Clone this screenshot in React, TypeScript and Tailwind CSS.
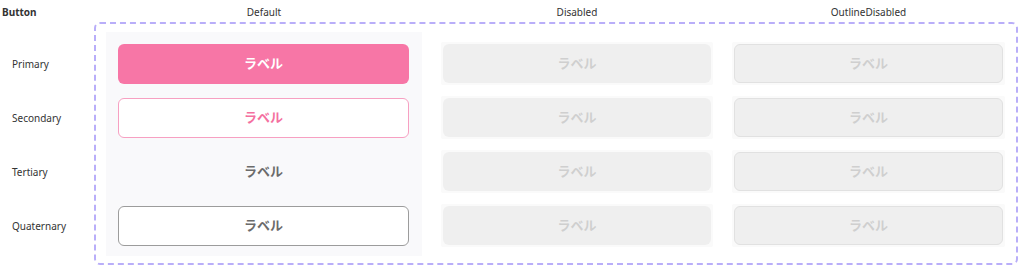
const rows = ["Primary", "Secondary", "Tertiary", "Quaternary"] as const;

const label = "ラベル";

function DefaultButton({ kind }: { kind: (typeof rows)[number] }) {
  const base =
    "flex h-10 w-full items-center justify-center rounded-md text-[13px] font-bold";
  if (kind === "Primary")
    return <div className={`${base} bg-[#f776a6] text-white`}>{label}</div>;
  if (kind === "Secondary")
    return (
      <div className={`${base} border border-[#f7a0c2] bg-white text-[#f4709f]`}>{label}</div>
    );
  if (kind === "Tertiary")
    return <div className={`${base} text-[#6b6b6b]`}>{label}</div>;
  return (
    <div className={`${base} border border-[#9c9c9c] bg-white text-[#6b6b6b]`}>{label}</div>
  );
}

function DisabledCell({ outline }: { outline?: boolean }) {
  return (
    <div className="rounded-[2px] bg-[#fafafa] p-[2px]">
      <div
        className={`flex h-[39px] items-center justify-center rounded-md bg-[#efefef] text-[13px] font-bold text-[#cfcfcf] ${
          outline ? "border border-[#e1e1e1]" : ""
        }`}
      >
        {label}
      </div>
    </div>
  );
}

export default function App() {
  return (
    <div
      className="h-[271px] w-[1024px] overflow-hidden bg-white text-[10px] text-[#333]"
      style={{ fontFamily: '"Noto Sans", "Noto Sans CJK JP", sans-serif' }}
    >
      <div className="flex h-[22px] items-start pt-[5px]">
        <div className="w-[106px] pl-[2px] font-bold">Button</div>
        <div className="w-[316px] text-center">Default</div>
        <div className="ml-[19px] w-[272px] text-center">Disabled</div>
        <div className="ml-[19px] w-[273px] text-center">OutlineDisabled</div>
      </div>
      <div className="flex">
        <div className="flex w-[94px] flex-col pt-[15px]">
          {rows.map((r) => (
            <div key={r} className="flex h-[54px] items-center pl-[12px]">
              {r}
            </div>
          ))}
        </div>
        <div className="flex h-[243px] w-[924px] gap-[19px] rounded-[6px] border-2 border-dashed border-[#b9aef9] pl-[10px] pt-[8px]">
          <div className="flex h-[224px] w-[316px] flex-col gap-[14px] bg-[#f9f9fb] pl-[12px] pr-[13px] pt-[12px]">
            {rows.map((r) => (
              <DefaultButton key={r} kind={r} />
            ))}
          </div>
          <div className="flex w-[272px] flex-col gap-[11px] pt-[10px]">
            {rows.map((r) => (
              <DisabledCell key={r} />
            ))}
          </div>
          <div className="flex w-[273px] flex-col gap-[11px] pt-[10px]">
            {rows.map((r) => (
              <DisabledCell key={r} outline />
            ))}
          </div>
        </div>
      </div>
    </div>
  );
}
